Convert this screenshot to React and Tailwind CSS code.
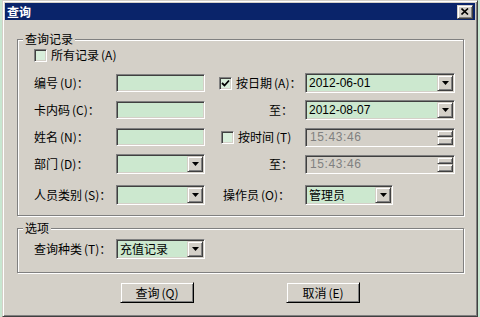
import React from "react";

const sunken =
  "border border-t-[#808080] border-l-[#808080] border-b-white border-r-white shadow-[inset_1px_1px_0_#404040,inset_-1px_-1px_0_#d4d0c8]";
const raised =
  "border border-t-[#d4d0c8] border-l-[#d4d0c8] border-b-[#404040] border-r-[#404040] shadow-[inset_1px_1px_0_#fff,inset_-1px_-1px_0_#808080] bg-[#d4d0c8]";

function Key({ k }) {
  return <span className="ml-[2px]">({k})</span>;
}

function Arrow() {
  return (
    <div className={`${raised} w-[16px] h-full flex items-center justify-center`}>
      <svg width="7" height="4" viewBox="0 0 7 4">
        <polygon points="0,0 7,0 3.5,4" fill="#000" />
      </svg>
    </div>
  );
}

function TextBox() {
  return <div className={`${sunken} w-[89px] h-[18px] bg-[#cce8cf]`} />;
}

function Combo({ w, value, mono }) {
  return (
    <div className={`${sunken} ${w} h-[20px] bg-[#cce8cf] p-[1px] flex items-center`}>
      <div
        className={`flex-1 pl-[2px] leading-[16px] text-black ${
          mono ? "font-['Liberation_Sans',sans-serif] text-[12px]" : "text-[12px]"
        }`}
      >
        {value}
      </div>
      <Arrow />
    </div>
  );
}

function TimeBox() {
  return (
    <div className={`${sunken} w-[150px] h-[19px] bg-[#d4d0c8] p-[1px] flex items-center`}>
      <div className="flex-1 pl-[3px] leading-[15px] text-[#808080] font-['Liberation_Sans',sans-serif] text-[12px] tracking-[0.6px]">
        15:43:46
      </div>
      <div className="w-[16px] h-full flex flex-col">
        <div className={`${raised} flex-1`} />
        <div className={`${raised} flex-1`} />
      </div>
    </div>
  );
}

function Check({ checked }) {
  return (
    <div className={`${sunken} w-[13px] h-[13px] bg-[#d8eedb] flex items-center justify-center`}>
      {checked && (
        <svg width="9" height="9" viewBox="0 0 9 9">
          <path d="M1 4 L3.5 6.5 L8 1.5" stroke="#000" strokeWidth="1.8" fill="none" />
        </svg>
      )}
    </div>
  );
}

function Button({ children }) {
  return (
    <div
      className={`w-[74px] h-[21px] flex items-center justify-center text-[12px] ${raised} border-b-black border-r-black`}
    >
      {children}
    </div>
  );
}

function Group({ title, className, children }) {
  return (
    <div
      className={`relative border border-[#808080] shadow-[inset_1px_1px_0_#fff,1px_1px_0_#fff] ${className}`}
    >
      <div className="absolute -top-[8px] left-[5px] px-[2px] bg-[#d4d0c8] text-[12px] leading-[14px]">
        {title}
      </div>
      {children}
    </div>
  );
}

export default function App() {
  return (
    <div className="w-[480px] h-[317px] bg-[#c8e6d0] pl-[2px] font-['Noto_Sans_CJK_SC',sans-serif] text-black overflow-hidden">
      <div className="w-[476px] h-[317px] bg-[#d4d0c8] border border-t-[#d4d0c8] border-l-[#d4d0c8] border-b-[#404040] border-r-[#404040] shadow-[inset_1px_1px_0_#fff,inset_-1px_-1px_0_#808080] p-[2px] flex flex-col">
        <div className="h-[17px] bg-[#0a246a] flex items-center justify-between pl-[2px] pr-[2px]">
          <span className="text-white font-bold text-[12px] leading-[14px]">查询</span>
          <div className={`${raised} w-[16px] h-[14px] flex items-center justify-center`}>
            <svg width="8" height="7" viewBox="0 0 8 7">
              <path d="M0.5 0.5 L7 6.5 M7 0.5 L0.5 6.5" stroke="#000" strokeWidth="1.6" />
            </svg>
          </div>
        </div>

        <Group title="查询记录" className="ml-[12px] w-[447px] mt-[19px] pt-[8px] pb-[10px]">
          <div className="flex items-center h-[14px] pl-[16px] text-[12px]">
            <Check />
            <span className="ml-[4px]">
              所有记录<Key k="A" />
            </span>
          </div>

          <div className="flex items-center h-[20px] mt-[11px] text-[12px]">
            <div className="w-[98px] pl-[16px]">
              编号<Key k="U" />：
            </div>
            <TextBox />
            <div className="w-[14px]" />
            <div className="w-[86px] flex items-center">
              <Check checked />
              <span className="ml-[4px]">
                按日期<Key k="A" />：
              </span>
            </div>
            <Combo w="w-[150px]" value="2012-06-01" mono />
          </div>

          <div className="flex items-center h-[20px] mt-[7px] text-[12px]">
            <div className="w-[98px] pl-[16px]">
              卡内码<Key k="C" />：
            </div>
            <TextBox />
            <div className="w-[14px]" />
            <div className="w-[86px] text-right pr-[12px]">至：</div>
            <Combo w="w-[150px]" value="2012-08-07" mono />
          </div>

          <div className="flex items-center h-[20px] mt-[7px] text-[12px]">
            <div className="w-[98px] pl-[16px]">
              姓名<Key k="N" />：
            </div>
            <TextBox />
            <div className="w-[14px]" />
            <div className="w-[86px] flex items-center pl-[2px]">
              <Check />
              <span className="ml-[4px]">
                按时间<Key k="T" />
              </span>
            </div>
            <TimeBox />
          </div>

          <div className="flex items-center h-[20px] mt-[7px] text-[12px]">
            <div className="w-[98px] pl-[16px]">
              部门<Key k="D" />：
            </div>
            <Combo w="w-[89px]" value="" />
            <div className="w-[14px]" />
            <div className="w-[86px] text-right pr-[12px]">至：</div>
            <TimeBox />
          </div>

          <div className="flex items-center h-[20px] mt-[11px] text-[12px]">
            <div className="w-[98px] pl-[16px]">
              人员类别<Key k="S" />：
            </div>
            <Combo w="w-[89px]" value="" />
            <div className="w-[14px]" />
            <div className="w-[86px] pl-[4px]">
              操作员<Key k="O" />：
            </div>
            <Combo w="w-[88px]" value="管理员" />
          </div>
        </Group>

        <Group title="选项" className="ml-[12px] w-[447px] mt-[12px] pt-[10px] pb-[13px]">
          <div className="flex items-center h-[20px] text-[12px]">
            <div className="w-[98px] pl-[16px]">
              查询种类<Key k="T" />：
            </div>
            <Combo w="w-[89px]" value="充值记录" />
          </div>
        </Group>

        <div className="flex mt-[9px] pl-[115px] gap-[92px]">
          <Button>
            查询<Key k="Q" />
          </Button>
          <Button>
            取消<Key k="E" />
          </Button>
        </div>
      </div>
    </div>
  );
}
